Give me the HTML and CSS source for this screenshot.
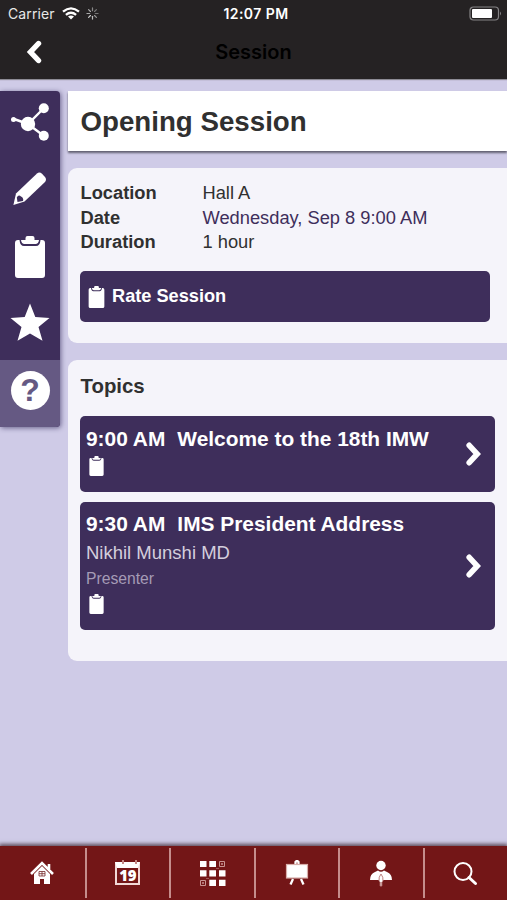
FILE: index.html
```html
<!DOCTYPE html>
<html lang="en">
<head>
<meta charset="utf-8">
<title>Session</title>
<link rel="stylesheet" href="styles.css">
</head>
<body>
<svg width="0" height="0" class="defs" aria-hidden="true">
  <symbol id="clipboard" viewBox="0 0 30 42"><path d="M0 7Q0 4 3 4H4.500Q5 10 9 10H21Q25 10 25.500 4H27Q30 4 30 7V39Q30 42 27 42H3Q0 42 0 39Z"/><path d="M6 4H10.500V2Q10.500 0 12.500 0H17.500Q19.500 0 19.500 2V4H24Q23.500 8 20.500 8H9.500Q6.500 8 6 4Z"/></symbol>
  <symbol id="chevron" viewBox="0 0 16 24"><path d="M3.200 3.300L11.200 12L3.200 20.700" fill="none" stroke="#fff" stroke-width="5.600" stroke-linecap="round" stroke-linejoin="miter"/></symbol>
</svg>
<div class="app">
  <header class="top">
    <div class="status">
      <div class="carrier"><span>Carrier</span>
        <svg class="wifi" width="18" height="13" viewBox="0 0 18 13"><g fill="none" stroke="#fff" stroke-width="2.300"><path d="M1 4.700Q9-2 17 4.700"/><path d="M3.900 7.800Q9 3.600 14.100 7.800"/></g><path d="M6 9.600Q9 7.600 12 9.600L9 12.600Z" fill="#fff"/></svg>
        <svg class="spinner" width="13" height="13" viewBox="0 0 14 14" stroke-width="1.300" stroke-linecap="round"><path d="M7 1V4" stroke="#888"/><path d="M11.200 2.800L9.200 4.800" stroke="#777"/><path d="M13 7H10" stroke="#777"/><path d="M11.200 11.200L9.200 9.200" stroke="#999"/><path d="M7 13V10" stroke="#bbb"/><path d="M2.800 11.200L4.800 9.200" stroke="#ccc"/><path d="M1 7H4M2.800 2.800L4.800 4.800" stroke="#aaa"/></svg>
      </div>
      <span class="clock">12:07 PM</span>
      <svg class="battery" width="33" height="15" viewBox="0 0 33 15"><rect x="1" y="1" width="28.500" height="13" rx="3.500" fill="none" stroke="#858385" stroke-width="1.200"/><rect x="3" y="3" width="20" height="9" rx="1" fill="#fff"/><path d="M31 5.500Q33 7.500 31 9.500Z" fill="#858385"/></svg>
    </div>
    <div class="nav">
      <svg class="back" width="16" height="24" viewBox="0 0 16 24"><path d="M12.500 3.500L4.500 12L12.500 20.500" fill="none" stroke="#fff" stroke-width="5.400" stroke-linecap="round"/></svg>
      <h1>Session</h1>
    </div>
  </header>
  <div class="body">
    <aside class="side">
      <a class="tool"><svg width="60" height="67" viewBox="0 0 60 67" fill="#fff"><path d="M14 28L28 33L44 17M28 33L44 45" fill="none" stroke="#fff" stroke-width="2.400"/><circle cx="13.500" cy="28.500" r="2.500"/><circle cx="28" cy="33" r="7.200"/><circle cx="43.800" cy="17.200" r="5"/><circle cx="43.800" cy="44.800" r="5"/></svg></a>
      <a class="tool"><svg width="60" height="67" viewBox="0 0 60 67"><path d="M13.400 47L16 35.500L37 15.500Q39.500 13.500 42 15.800L45 19Q47 21.500 45 24L24.500 43.500Z" fill="#fff"/><path d="M16.800 39.500Q18.500 36.200 21 38.500Q24 40 23 43L17.500 44Z" fill="#3e2e5b"/></svg></a>
      <a class="tool"><svg width="30" height="42"><use href="#clipboard"/></svg></a>
      <a class="tool"><svg width="60" height="67" viewBox="0 0 60 67"><path d="M30 10.500L35.300 24L49.500 25L38.500 34L42.500 47.700L30 40.500L17.500 47.700L21.500 34L10.500 25L24.700 24Z" fill="#fff"/></svg></a>
      <a class="tool help"><span>?</span></a>
    </aside>
    <main>
      <section class="heading"><h2>Opening Session</h2></section>
      <section class="card details">
        <dl>
          <dt>Location</dt><dd>Hall A</dd>
          <dt>Date</dt><dd class="date">Wednesday, Sep 8 9:00 AM</dd>
          <dt>Duration</dt><dd>1 hour</dd>
        </dl>
        <a class="rate"><svg width="17" height="22"><use href="#clipboard"/></svg><span>Rate Session</span></a>
      </section>
      <section class="card topics">
        <h3>Topics</h3>
        <a class="topic first">
          <div><div class="title"><span>9:00 AM</span><span>Welcome to the 18th IMW</span></div>
          <svg class="note" width="15" height="20"><use href="#clipboard"/></svg></div>
          <svg class="go" width="16" height="24"><use href="#chevron"/></svg>
        </a>
        <a class="topic second">
          <div><div class="title"><span>9:30 AM</span><span>IMS President Address</span></div>
          <p class="person">Nikhil Munshi MD</p>
          <p class="role">Presenter</p>
          <svg class="note" width="15" height="20"><use href="#clipboard"/></svg></div>
          <svg class="go" width="16" height="24"><use href="#chevron"/></svg>
        </a>
      </section>
    </main>
  </div>
  <footer class="tabs">
    <a><svg width="26" height="24" viewBox="-1 0 26 24"><path d="M4 13L12 5L20 13V23H14V18H10V23H4Z" fill="#fff"/><path d="M1 13L12 2L23 13M19 8V3" fill="none" stroke="#fff" stroke-width="2.600"/><path d="M9 10.500H15V15H9ZM12 10.500V15M9 12.700H15" fill="none" stroke="#76282a" stroke-width=".8"/></svg></a>
    <a><div class="calendar"><b>19</b></div></a>
    <a><svg width="27" height="27" viewBox="0 0 27 27" fill="#fff"><path d="M1 1H7.500V7H1ZM10.300 1H17V7H10.300ZM1 10.300H7.500V16.500H1ZM10.300 10.300H17V16.500H10.300ZM20 10.300H26.500V16.500H20ZM10.300 19.700H17V26H10.300ZM20 19.700H26.500V26H20Z"/><g fill="none" stroke="#c89492"><path d="M20.500 1.500H25.500V6.500H20.500ZM22.500 3.500H23.500V4.500H22.500ZM1.500 20.500H6.500V25.500H1.500ZM3.500 22.500H4.500V23.500H3.500Z"/><path d="M17 8.500H20M7 18.500H10" opacity=".5"/></g></svg></a>
    <a><svg width="24" height="26" viewBox="0 0 24 26"><path d="M10.500 4V2Q12 0 13.500 2V4M8 19L5.500 24.500M16 19L18.500 24.500" fill="none" stroke="#fff" stroke-width="2.300"/><rect x="1.500" y="4.500" width="21" height="13.500" fill="#fff" stroke="#d8aeaa" stroke-width="1.200"/></svg></a>
    <a><svg width="24" height="27" viewBox="0 0 24 27"><circle cx="12" cy="5.500" r="4.700" fill="#fff"/><path d="M1 20Q1 14 6 12L9 10.500Q12 13 15 10.500L18 12Q23 14 23 20Z" fill="#fff"/><path d="M12 14Q14.500 17 14 21L12.800 22V26H11.200V22L10 21Q9.500 17 12 14Z" fill="#fff" stroke="#bd8280" stroke-width="1"/></svg></a>
    <a><svg width="26" height="25" viewBox="1 0 26 25" fill="none" stroke="#fff"><circle cx="11" cy="10.500" r="8.500" stroke-width="2"/><path d="M17 16.500L23.500 22.500" stroke-width="3" stroke-linecap="round"/></svg></a>
  </footer>
</div>
</body>
</html>
```
FILE: styles.css
```css
* { box-sizing: border-box; }
body { margin: 0; font-family: "Liberation Sans", Arial, sans-serif; color: #303030; }
h1, h2, h3, p, dl, dd { margin: 0; }
svg { display: block; flex: none; }
.defs { position: absolute; }
.app { width: 507px; height: 900px; display: flex; flex-direction: column; background: #cfcbe7; overflow: hidden; }

.top { height: 79px; background: #252223; flex: none; box-shadow: 0 1px 1px #8d8b94; }
.status { height: 28px; display: grid; grid-template-columns: 1fr auto 1fr; align-items: center; padding: 0 3px 0 8px; color: #fff; font: 14px/28px Inter, sans-serif; }
.carrier { display: flex; align-items: center; color: #e8e8e8; letter-spacing: .1px; }
.wifi { margin-left: 7px; margin-top: -2px; }
.spinner { margin-left: 6px; margin-top: -1px; }
.clock { font-weight: 600; letter-spacing: .45px; }
.battery { justify-self: end; margin-right: 2px; margin-top: -1px; }
.nav { height: 51px; display: grid; grid-template-columns: 1fr auto 1fr; align-items: center; padding-bottom: 3px; }
.back { margin-left: 26px; }
.nav h1 { font: 600 20px/48px Inter, sans-serif; color: #000; }

.body { flex: 1; display: flex; align-items: flex-start; gap: 8px; padding-top: 12px; }
.side { width: 60px; flex: none; background: #3e2e5b; border-radius: 0 4px 4px 0; box-shadow: 1px 1px 5px rgba(40,30,80,.6); overflow: hidden; }
.tool { height: 67.250px; display: flex; align-items: center; justify-content: center; fill: #fff; }
.tool:nth-child(3) { padding-bottom: 5px; }
.help { background: #655983; }
.help span { width: 39px; height: 39px; margin-bottom: 7px; border-radius: 50%; background: #fff; color: #655983; font: bold 32px/39px "Liberation Sans", sans-serif; text-align: center; }

main { flex: 1; min-width: 0; }
.heading { height: 60px; background: #fff; padding: 13px 12.500px; box-shadow: 0 2px 2px #626071; }
.heading h2 { font-size: 27.700px; line-height: 35px; }
.card { background: #f5f4fa; border-radius: 9px 0 0 9px; margin-top: 17px; padding: 13px 12px 0; }
.details { height: 175px; }
dl { display: grid; grid-template-columns: 122px 1fr; font-size: 18.300px; line-height: 24.500px; padding-left: .5px; }
dt { font-weight: bold; }
.date { color: #3e2e5b; }
.rate { width: 410px; height: 51px; margin-top: 16.500px; display: flex; align-items: center; gap: 7px; padding-left: 8px; border-radius: 5px; background: #3e2e5b; color: #fff; fill: #fff; font-size: 18.200px; font-weight: bold; }
.topics { height: 301px; margin-top: 17px; }
.topics h3 { font-size: 20.400px; line-height: 28px; margin: -1px 0 16px .5px; }
.topic { width: 415px; display: flex; justify-content: space-between; align-items: center; padding: 0 13px 0 6px; border-radius: 5px; background: #3e2e5b; color: #fff; fill: #fff; }
.first { height: 76px; }
.second { height: 128px; margin-top: 10px; }
.title { display: flex; gap: 12px; font-size: 20.900px; font-weight: bold; line-height: 26px; white-space: nowrap; margin: -2px 0 1px; }
.note { margin: 4px 0 5px 2.500px; }
.person { font-size: 18.500px; line-height: 22px; margin-top: 5px; color: #d4cedd; }
.role { font-size: 15.700px; line-height: 20px; margin-top: 5px; margin-bottom: 5px; color: #a59bb6; }

.tabs { height: 54px; flex: none; display: grid; grid-template-columns: repeat(6, 1fr); background: #731617; box-shadow: 0 -1px 4px 1px #5c4857; }
.tabs a { display: flex; align-items: center; justify-content: center; margin: 2px 0 2px; }
.tabs a + a { border-left: 2px solid #c58d8c; }
.calendar { width: 25px; height: 23px; border: 2px solid #f2d8d6; border-top: 6px solid #fff; font: bold 15px/15px "Open Sans", sans-serif; color: #fff; text-align: center; letter-spacing: -.3px; position: relative; }
.calendar::before { content: ""; position: absolute; left: 5px; top: -8px; width: 11px; height: 4px; border: solid #c48986; border-width: 0 2px; }
```
